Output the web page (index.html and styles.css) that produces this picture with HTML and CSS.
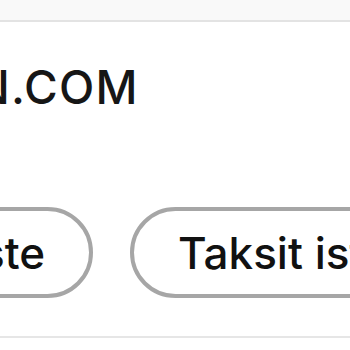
FILE: index.html
```html
<!DOCTYPE html>
<html>
<head>
<meta charset="utf-8">
<link rel="stylesheet" href="styles.css">
</head>
<body>
<div class="page">
  <div class="topbar"></div>
  <div class="content">
    <h1 class="title">N.COM</h1>
    <div class="actions">
      <button class="pill pill-first">Liste</button>
      <button class="pill">Taksit iste</button>
    </div>
  </div>
  <div class="divider"></div>
</div>
</body>
</html>
```
FILE: styles.css
```css
html, body {
  margin: 0;
  padding: 0;
  background: #ffffff;
}
body {
  width: 350px;
  height: 350px;
  overflow: hidden;
  font-family: Inter, "Noto Sans", sans-serif;
  color: #111111;
}
.page {
  display: flex;
  flex-direction: column;
  width: 350px;
}
.topbar {
  height: 20px;
  background: #f9f9f9;
  border-bottom: 2px solid #e3e3e3;
}
.content {
  display: flex;
  flex-direction: column;
  padding-top: 37px;
}
.title {
  margin: 0 0 0 -25px;
  font-size: 46px;
  font-weight: 500;
  line-height: 56px;
  letter-spacing: 1.2px;
  color: #161616;
  white-space: nowrap;
}
.actions {
  display: flex;
  gap: 37px;
  margin-top: 92px;
  margin-left: -103px;
  white-space: nowrap;
}
.pill {
  flex: none;
  box-sizing: border-box;
  height: 91px;
  padding: 0 44px;
  border: 4px solid #a6a6a6;
  border-radius: 46px;
  background: #ffffff;
  font-family: Inter, "Noto Sans", sans-serif;
  font-size: 44px;
  font-weight: 500;
  color: #111111;
}
.divider {
  height: 2px;
  margin-top: 38px;
  background: #e6e6e6;
}
```
